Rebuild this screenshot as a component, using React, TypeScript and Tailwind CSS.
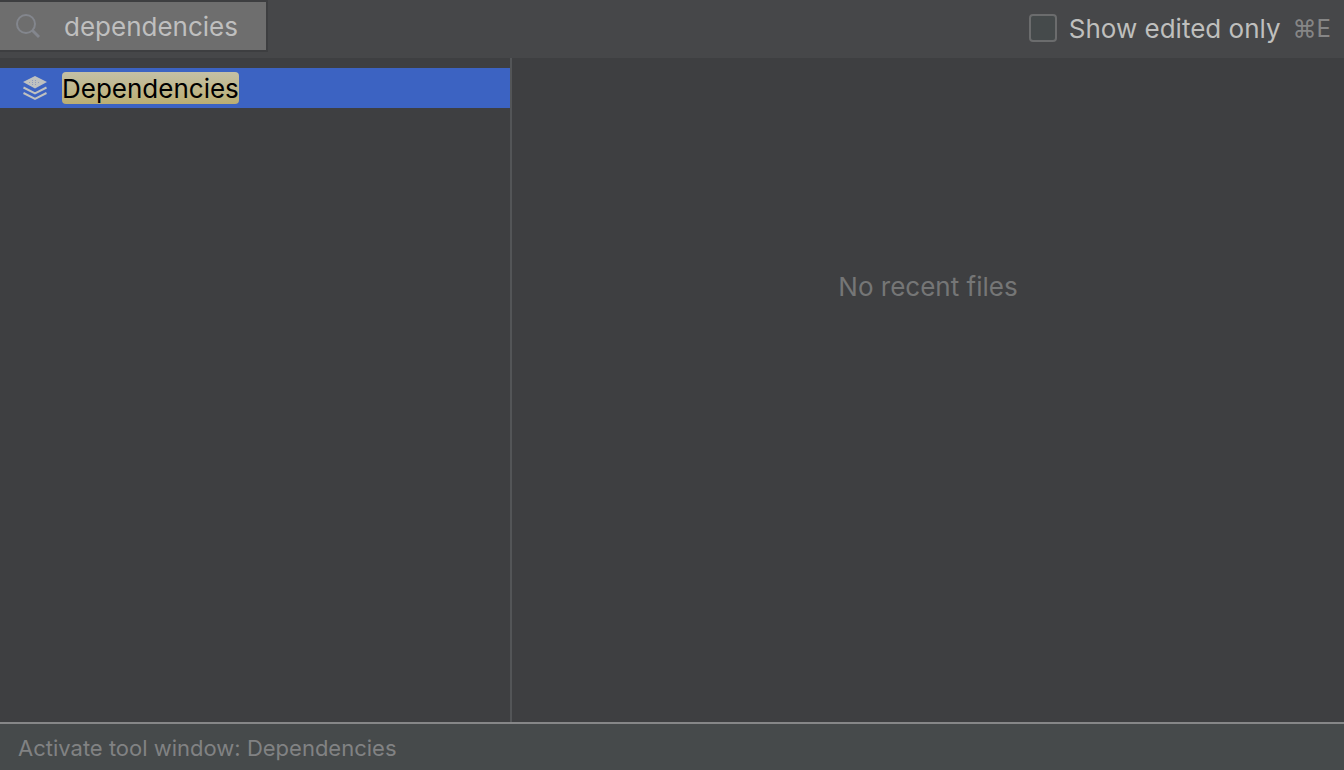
import React, { useState } from "react";

const items = ["Dependencies"];

function SearchIcon() {
  return (
    <svg
      className="h-6 w-6 shrink-0"
      viewBox="0 0 24 24"
      fill="none"
      stroke="#83868d"
      strokeWidth="2"
      aria-hidden="true"
    >
      <circle cx="10" cy="10" r="9" />
      <path d="M16.5 16.5 L23 23" strokeWidth="2.8" />
    </svg>
  );
}

function LayersIcon() {
  return (
    <svg className="h-6 w-6 shrink-0" viewBox="0 0 24 24" fill="none" aria-hidden="true">
      <path d="M12 0 L24 6 L12 12.5 L0 6 Z" fill="#bfc1c0" />
      <path d="M0.5 11.5 L12 17.3 L23.5 11.5" stroke="#bfc1c0" strokeWidth="2" />
      <path d="M0.5 17 L12 22.8 L23.5 17" stroke="#bfc1c0" strokeWidth="2" />
      {/* dotted texture on the top layer */}
      <path
        d="M12 2.5h.01M9 4.5h6M6 6.5h12M9 8.5h6M12 10.5h.01"
        stroke="#8f9cbd"
        strokeWidth="1"
        strokeDasharray="1 2"
      />
    </svg>
  );
}

export default function App() {
  const [query, setQuery] = useState("dependencies");
  const [editedOnly, setEditedOnly] = useState(false);

  return (
    <div className="flex min-h-screen flex-col bg-[#3e3f41] font-['Inter','Liberation_Sans',sans-serif] text-[26px] leading-8">
      <header className="flex h-[58px] items-start justify-between bg-[#464749] pr-[13px]">
        <label className="flex h-[52px] w-[268px] items-center gap-6 border-y-2 border-r-2 border-[#3d3e40] bg-[#6e6e6e] pl-4">
          <SearchIcon />
          <input
            type="text"
            aria-label="Search"
            value={query}
            onChange={(e) => setQuery(e.target.value)}
            className="w-full min-w-0 bg-transparent pt-[2px] text-[#bfbfbf] outline-none"
          />
        </label>

        <label className="flex h-14 items-center gap-3">
          <input
            type="checkbox"
            checked={editedOnly}
            onChange={(e) => setEditedOnly(e.target.checked)}
            className="h-7 w-7 appearance-none rounded border-2 border-[#6b6c6d] bg-[#454a4b] checked:bg-[#3c63c2]"
          />
          <span className="pt-[2px] text-[#bfbfbd]">Show edited only</span>
          <kbd className="pt-[2px] font-['Inter','Liberation_Sans',sans-serif] text-2xl text-[#868686]">⌘E</kbd>
        </label>
      </header>

      <main className="flex flex-1">
        <nav className="w-[512px] shrink-0 border-r-2 border-[#535557] pt-[10px]">
          <ul>
            {items.map((item) => (
              <li key={item}>
                <button
                  type="button"
                  className="flex h-10 w-full items-center gap-[15px] bg-[#3c63c2] pl-[23px] text-left text-black"
                >
                  <LayersIcon />
                  <mark className="rounded bg-linear-to-b from-[#c4c0a6] to-[#bbae72] pt-[2px] leading-[30px] text-black">
                    {item}
                  </mark>
                </button>
              </li>
            ))}
          </ul>
        </nav>

        <section className="flex flex-1 justify-center pt-[213px]">
          <p className="text-[#757676]">No recent files</p>
        </section>
      </main>

      <footer className="flex h-12 items-center border-t-2 border-[#868788] bg-[#464a4b] px-[18px] pt-[2px] text-[22px] text-[#818283]">
        Activate tool window: Dependencies
      </footer>
    </div>
  );
}
